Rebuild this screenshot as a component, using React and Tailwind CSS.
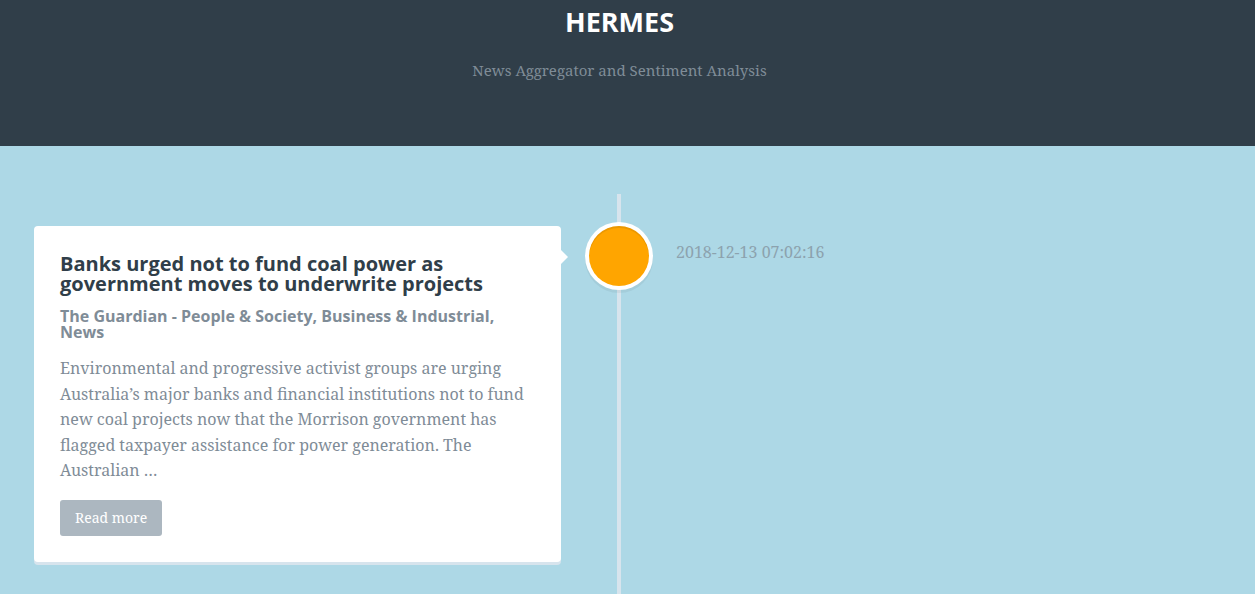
const serif = "font-['Noto_Serif','Droid_Serif','DejaVu_Serif',serif]";
const sans = "font-['Open_Sans','Noto_Sans',sans-serif]";

const App = () => {
  return (
    <div className="w-full h-[594px] overflow-hidden bg-[#add8e6]">
      <header className="h-[146px] bg-[#303e49]">
        <div className="w-[1239px] flex flex-col items-center">
          <h1 className={`${sans} mt-[5px] text-[27px] leading-[34px] font-bold text-white`}>HERMES</h1>
          <p className={`${serif} mt-[20px] text-[15px] leading-[22px] text-[#7f8c97]`}>
            News Aggregator and Sentiment Analysis
          </p>
        </div>
      </header>

      <section className="relative h-[448px]">
        {/* timeline spine */}
        <div className="absolute left-[617px] top-[48px] bottom-0 w-1 bg-[#d7e4ed]" />

        <div className="relative flex items-start pt-[80px] pl-[34px]">
          <div className="relative w-[527px] bg-white rounded-[4px] shadow-[0_3px_0_#d7e4ed] p-[26px]">
            <div className="absolute left-full top-[24px] border-y-[7px] border-l-[7px] border-y-transparent border-l-white" />
            <h2 className={`${sans} text-[20px] leading-[20px] font-bold text-[#303e49] pt-[2px]`}>
              Banks urged not to fund coal power as government moves to underwrite projects
            </h2>
            <h3 className={`${sans} mt-[14px] text-[16px] leading-[16px] font-bold text-[#7f8c97]`}>
              The Guardian - People &amp; Society, Business &amp; Industrial, News
            </h3>
            <p className={`${serif} mt-[16px] text-[16px] leading-[25.6px] text-[#7f8c97]`}>
              Environmental and progressive activist groups are urging Australia’s major banks and financial
              institutions not to fund new coal projects now that the Morrison government has flagged taxpayer
              assistance for power generation. The Australian …
            </p>
            <button
              className={`${serif} mt-[16px] h-[36px] px-[15px] rounded-[3px] bg-[#acb7c0] text-white text-[14px]`}
            >
              Read more
            </button>
          </div>

          <div className="ml-[28px] w-[60px] h-[60px] shrink-0 rounded-full bg-[#ffa500] shadow-[0_0_0_4px_white,inset_0_2px_0_rgba(0,0,0,0.08),0_3px_0_4px_rgba(0,0,0,0.05)]" />

          <span className={`${serif} ml-[27px] mt-[14px] text-[16px] leading-[24px] text-[#7f8c97] opacity-70`}>
            2018-12-13 07:02:16
          </span>
        </div>
      </section>
    </div>
  );
};

export default App;
